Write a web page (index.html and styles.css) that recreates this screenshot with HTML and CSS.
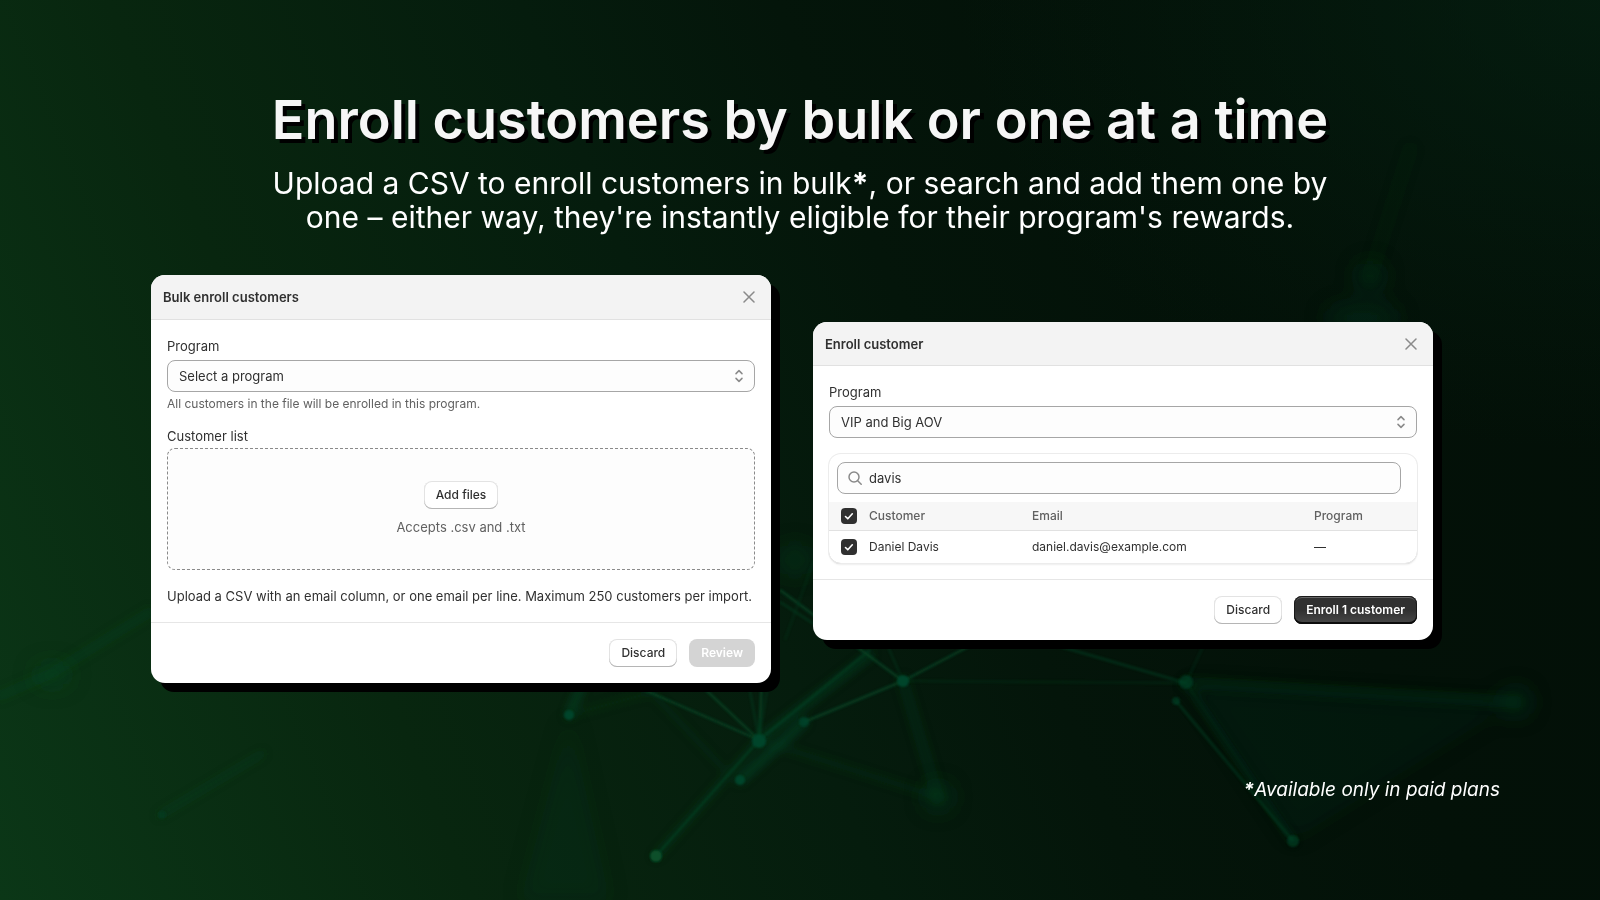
FILE: index.html
```html
<!DOCTYPE html>
<html lang="en">
<head>
<meta charset="utf-8">
<title>Enroll customers by bulk or one at a time</title>
<link rel="stylesheet" href="styles.css">
</head>
<body>
<svg class="backdrop" viewBox="0 0 1600 900" preserveAspectRatio="xMidYMid slice" aria-hidden="true">
  <defs>
    <filter id="soft1" x="-20%" y="-20%" width="140%" height="140%"><feGaussianBlur stdDeviation="1"/></filter>
    <filter id="soft3" x="-20%" y="-20%" width="140%" height="140%"><feGaussianBlur stdDeviation="4"/></filter>
    <filter id="soft9" x="-50%" y="-50%" width="200%" height="200%"><feGaussianBlur stdDeviation="11"/></filter>
  </defs>
  <g filter="url(#soft9)" fill="#06512f">
    <ellipse cx="52" cy="675" rx="18" ry="11" opacity=".35"/>
    <circle cx="1370" cy="276" r="13" opacity=".35"/>
    <ellipse cx="1362" cy="318" rx="38" ry="14" opacity=".25"/>
    <circle cx="1516" cy="702" r="13" opacity=".4"/>
    <circle cx="938" cy="797" r="12" opacity=".45"/>
    <circle cx="795" cy="560" r="15" opacity=".35"/>
    <path d="M569 715 L520 900 L610 900Z" opacity=".1"/>
    <path d="M1186 683 L1516 702 L1293 841Z" opacity=".09"/>
  </g>
  <g filter="url(#soft3)" stroke="#07512f" fill="none" stroke-linecap="round">
    <path d="M0 696 L52 673 L150 612" stroke-width="10" opacity=".2"/>
    <path d="M160 815 L262 754" stroke-width="6" opacity=".25"/>
    <path d="M569 715 L582 685" stroke-width="7" opacity=".5"/>
    <path d="M759 740 L870 655" stroke-width="7" opacity=".45"/>
    <path d="M759 740 L938 797" stroke-width="7" opacity=".18"/>
    <path d="M903 681 L938 797" stroke-width="12" opacity=".2"/>
    <path d="M804 722 L740 780" stroke-width="8" opacity=".5"/>
    <path d="M1186 683 L1516 702" stroke-width="12" opacity=".18"/>
    <path d="M1186 683 L1293 841" stroke-width="5" opacity=".25"/>
    <path d="M1370 276 L1410 150" stroke-width="16" opacity=".06"/>
    <path d="M640 680 L725 770" stroke-width="6" opacity=".15"/>
    <path d="M759 740 L656 856" stroke-width="6" opacity=".35"/>
    <path d="M569 715 L650 693" stroke-width="5" opacity=".2"/>
  </g>
  <g filter="url(#soft1)" stroke="#07522f" fill="none" stroke-width="3" opacity=".5">
    <path d="M759 740 L610 675"/>
    <path d="M759 740 L690 675"/>
    <path d="M759 740 L764 640"/>
    <path d="M759 740 L748 680" opacity=".5"/>
    <path d="M759 740 L775 640" opacity=".4"/>
    <path d="M759 740 L870 650" opacity=".7"/>
    <path d="M759 740 L656 856" opacity=".7"/>
    <path d="M804 722 L903 681"/>
    <path d="M903 681 L780 590"/>
    <path d="M903 681 L1000 630"/>
    <path d="M903 681 L1186 683" opacity=".35"/>
    <path d="M903 681 L885 640" opacity=".4"/>
    <path d="M1186 683 L1055 645" opacity=".7"/>
    <path d="M1186 683 L1206 640" opacity=".3"/>
    <path d="M1176 701 L1293 841" opacity=".7"/>
    <path d="M1186 683 L1293 841" opacity=".2"/>
    <path d="M780 602 L814 624" opacity=".6"/>
    <path d="M785 640 L814 560" opacity=".3"/>
  </g>
  <g filter="url(#soft1)" fill="#06452a">
    <circle cx="759" cy="741" r="7"/>
    <circle cx="804" cy="722" r="5" opacity=".8"/>
    <circle cx="740" cy="780" r="5"/>
    <circle cx="656" cy="856" r="6" fill="#07502a"/>
    <circle cx="569" cy="715" r="5"/>
    <circle cx="903" cy="681" r="6"/>
    <circle cx="1186" cy="682" r="7" opacity=".6"/>
    <circle cx="1176" cy="701" r="4" opacity=".6"/>
    <circle cx="1293" cy="841" r="6" opacity=".6"/>
    <circle cx="162" cy="815" r="4" opacity=".4"/>
  </g>
</svg>

<main class="slide">
  <header class="intro">
    <h1 class="intro-title">Enroll customers by bulk or one at a time</h1>
    <p class="intro-text">Upload a CSV to enroll customers in bulk<b>*</b>, or search and add them one by<br>one – either way, they're instantly eligible for their program's rewards.</p>
  </header>

  <div class="dialogs">
    <section class="dialog" aria-labelledby="bulk-title">
      <div class="dialog-head">
        <h2 class="dialog-title" id="bulk-title">Bulk enroll customers</h2>
        <button class="close" type="button" aria-label="Close"><svg width="12" height="12" viewBox="0 0 12 12"><path d="M1 1l10 10M11 1L1 11"/></svg></button>
      </div>
      <div class="dialog-body">
        <label class="label" for="bulk-program">Program</label>
        <div class="select-wrap">
          <select class="field" id="bulk-program"><option>Select a program</option></select>
          <svg class="chevrons" width="10" height="14" viewBox="0 0 10 14"><path d="M2 4.600 5 1.600l3 3M2 9.400l3 3 3-3"/></svg>
        </div>
        <p class="help">All customers in the file will be enrolled in this program.</p>
        <label class="label list-label" for="add-files">Customer list</label>
        <div class="dropzone">
          <button class="btn" type="button" id="add-files">Add files</button>
          <span class="accepts">Accepts .csv and .txt</span>
        </div>
        <p class="note">Upload a CSV with an email column, or one email per line. Maximum 250 customers per import.</p>
      </div>
      <div class="dialog-foot">
        <button class="btn" type="button">Discard</button>
        <button class="btn btn-disabled" type="button" disabled>Review</button>
      </div>
    </section>

    <section class="dialog dialog-single" aria-labelledby="single-title">
      <div class="dialog-head">
        <h2 class="dialog-title" id="single-title">Enroll customer</h2>
        <button class="close" type="button" aria-label="Close"><svg width="12" height="12" viewBox="0 0 12 12"><path d="M1 1l10 10M11 1L1 11"/></svg></button>
      </div>
      <div class="dialog-body">
        <label class="label" for="single-program">Program</label>
        <div class="select-wrap">
          <select class="field" id="single-program"><option>VIP and Big AOV</option></select>
          <svg class="chevrons" width="10" height="14" viewBox="0 0 10 14"><path d="M2 4.600 5 1.600l3 3M2 9.400l3 3 3-3"/></svg>
        </div>
        <div class="card">
          <div class="search">
            <svg class="search-icon" width="14" height="14" viewBox="0 0 14 14"><circle cx="6" cy="6" r="5"/><path d="M9.700 9.700l3.500 3.500"/></svg>
            <input class="field search-input" type="text" value="davis" aria-label="Search customers">
          </div>
          <table class="customers">
            <colgroup><col class="col-check"><col class="col-name"><col class="col-email"><col></colgroup>
            <thead>
              <tr>
                <th class="cell-check"><input class="check" type="checkbox" checked aria-label="Select all customers"></th>
                <th>Customer</th><th>Email</th><th>Program</th>
              </tr>
            </thead>
            <tbody>
              <tr>
                <td class="cell-check"><input class="check" type="checkbox" checked aria-label="Select Daniel Davis"></td>
                <td>Daniel Davis</td><td>daniel.davis@example.com</td><td>—</td>
              </tr>
            </tbody>
          </table>
        </div>
      </div>
      <div class="dialog-foot">
        <button class="btn" type="button">Discard</button>
        <button class="btn btn-primary" type="button">Enroll 1 customer</button>
      </div>
    </section>
  </div>

  <p class="footnote"><b>*</b>Available only in paid plans</p>
</main>
</body>
</html>
```

FILE: styles.css
```css
* { box-sizing: border-box; }

body {
  margin: 0;
  min-height: 100vh;
  position: relative;
  overflow-x: hidden;
  font-family: Inter, "Liberation Sans", sans-serif;
  font-size: 13px;
  line-height: 20px;
  color: #303030;
  background:
    radial-gradient(ellipse 40% 50% at 100% 0, rgba(6, 40, 22, .5), transparent),
    linear-gradient(68deg, #0b3717 0%, #08260f 24%, #051c0d 45%, #04150a 58%, #031108 75%, #030f07 100%);
}

h1, h2, p { margin: 0; }
button, input, select { font: inherit; color: inherit; }

.backdrop {
  position: absolute;
  inset: 0;
  width: 100%;
  height: 100%;
}

.slide { position: relative; padding-top: 86px; }

.intro { text-align: center; color: #fff; }

.intro-title {
  font-size: 54px;
  line-height: 68px;
  font-weight: 600;
  color: #f6f6f6;
  text-shadow: 4px 4px 0 #000;
}

.intro-text {
  margin-top: 12px;
  font-size: 30px;
  line-height: 34px;
}

.dialogs {
  display: grid;
  grid-template-columns: 1fr 1fr;
  align-items: start;
  gap: 42px;
  margin-top: 41px;
  padding: 0 167px 0 151px;
}

.dialog {
  background: #fff;
  border-radius: 14px;
  box-shadow: 9px 9px 0 #000;
}

.dialog-single { margin-top: 47px; }

.dialog-head {
  display: flex;
  align-items: center;
  justify-content: space-between;
  height: 45px;
  padding: 0 16px 0 12px;
  background: #f3f3f3;
  border-bottom: 1px solid #e1e1e1;
  border-radius: 14px 14px 0 0;
}

.dialog-single .dialog-head { height: 44px; }

.dialog-title { font-size: 13px; line-height: 20px; font-weight: 600; }

.close {
  display: flex;
  padding: 0;
  border: 0;
  background: none;
}

.close svg { fill: none; stroke: #8a8a8a; stroke-width: 1.500; stroke-linecap: round; }

.dialog-body { padding: 16px; }

.label { display: block; margin-bottom: 4px; }

.select-wrap { position: relative; }

.field {
  display: block;
  width: 100%;
  height: 32px;
  padding: 0 11px;
  border: 1px solid #a6a6a6;
  border-radius: 8px;
  background: #fdfdfd;
  appearance: none;
}

.chevrons {
  position: absolute;
  right: 11px;
  top: 9px;
  fill: none;
  stroke: #8a8a8a;
  stroke-width: 1.500;
  stroke-linecap: round;
  stroke-linejoin: round;
}

.help { margin-top: 4px; font-size: 12px; line-height: 16px; color: #616161; }

.list-label { margin: 14px 0 2px; }

.dropzone {
  display: flex;
  flex-direction: column;
  align-items: center;
  justify-content: center;
  gap: 8px;
  height: 122px;
  border: 1px dashed #8a8a8a;
  border-radius: 8px;
  background: #fdfdfd;
}

.accepts { color: #616161; }

.note { margin-top: 16px; }

.btn {
  height: 28px;
  padding: 0 12px;
  border: 0;
  border-radius: 8px;
  font-size: 12px;
  line-height: 16px;
  font-weight: 500;
  background: #fff;
  box-shadow: inset 0 -1px 0 #b5b5b5, inset 0 0 0 1px #e3e3e3;
}

.btn-disabled {
  font-weight: 600;
  color: #fff;
  background: #d4d4d4;
  box-shadow: none;
}

.btn-primary {
  font-weight: 600;
  color: #fff;
  background: linear-gradient(180deg, #303030 50%, #484848);
  box-shadow: inset 0 -2px 0 #0c0c0c, inset 0 0 0 1px #1a1a1a, inset 0 2px 0 #666;
}

.dialog-foot {
  display: flex;
  justify-content: flex-end;
  gap: 12px;
  padding: 16px;
  border-top: 1px solid #e6e6e6;
}

.card {
  margin-top: 16px;
  overflow: hidden;
  border-radius: 12px;
  box-shadow: 0 0 0 1px #ececec, 0 1px 0 #cfcfcf, 0 2px 2px #eee;
}

.search { position: relative; padding: 8px 16px 8px 8px; }

.search-input { padding-left: 31px; }

.search-icon {
  position: absolute;
  left: 19px;
  top: 17px;
  fill: none;
  stroke: #8a8a8a;
  stroke-width: 1.500;
  stroke-linecap: round;
}

.customers {
  width: 100%;
  table-layout: fixed;
  border-collapse: collapse;
  font-size: 12px;
  line-height: 16px;
  text-align: left;
}

.col-check { width: 40px; }
.col-name { width: 163px; }
.col-email { width: 282px; }

.customers th {
  height: 28px;
  padding: 0;
  font-weight: 550;
  color: #616161;
  background: #f7f7f7;
  border-bottom: 1px solid #e1e1e1;
}

.customers td { height: 33px; padding: 0; }

.customers .cell-check { padding-left: 12px; }

.check {
  display: block;
  width: 16px;
  height: 16px;
  margin: 0;
  appearance: none;
  border-radius: 4px;
  background: #303030 url("data:image/svg+xml,%3Csvg xmlns='http://www.w3.org/2000/svg' viewBox='0 0 16 16'%3E%3Cpath d='M4.500 8.500l2.300 2.300 4.500-5' fill='none' stroke='white' stroke-width='1.600' stroke-linecap='round' stroke-linejoin='round'/%3E%3C/svg%3E");
}

.footnote {
  margin-top: 95px;
  padding-right: 100px;
  text-align: right;
  font-size: 19px;
  line-height: 24px;
  font-style: italic;
  color: #fff;
}
```
